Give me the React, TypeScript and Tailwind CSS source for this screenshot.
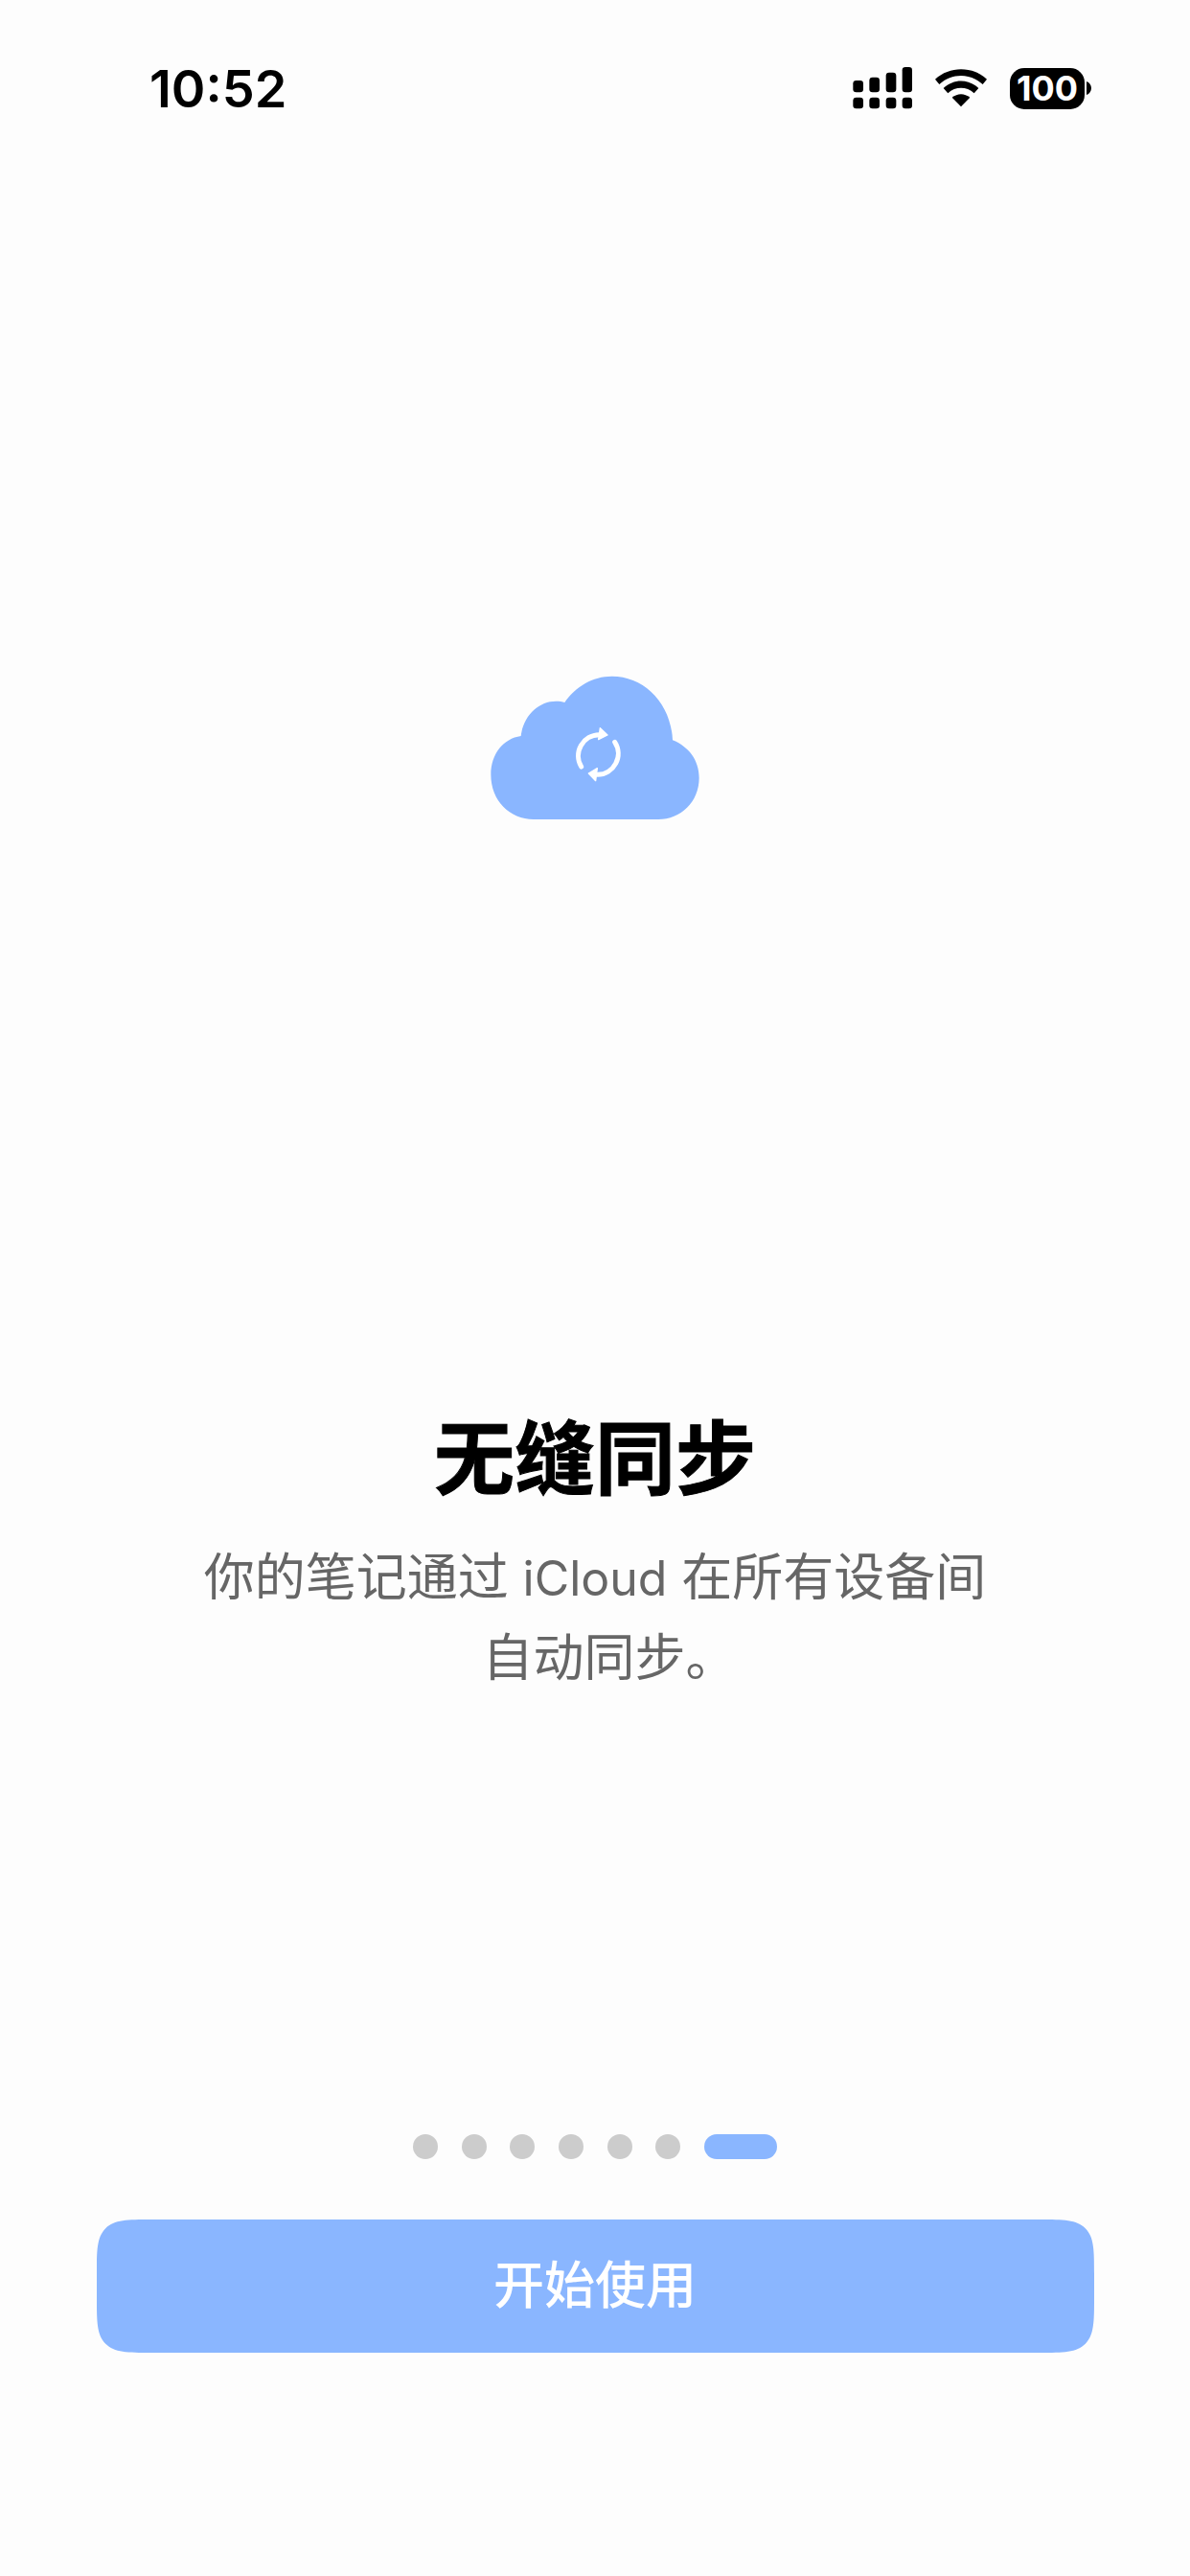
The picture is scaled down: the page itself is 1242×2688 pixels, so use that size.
import React from "react";

const FONT = "font-['Inter','Noto_Sans_CJK_SC',sans-serif]";

function SignalIcon() {
  return (
    <svg width="62" height="44" viewBox="0 0 186 132" className="block fill-black">
      <rect x="1" y="42" width="32" height="37" rx="10" />
      <rect x="52" y="32" width="32" height="47" rx="10" />
      <rect x="104" y="17" width="32" height="62" rx="10" />
      <rect x="155" y="0" width="31" height="79" rx="10" />
      <rect x="1" y="95" width="32" height="35" rx="10" />
      <rect x="52" y="95" width="32" height="35" rx="10" />
      <rect x="104" y="95" width="32" height="35" rx="10" />
      <rect x="155" y="95" width="31" height="35" rx="10" />
    </svg>
  );
}

function WifiIcon() {
  return (
    <svg width="54" height="40" viewBox="0 0 162 120" className="block fill-black">
      <path d="M0 32 C45 -10 117 -10 162 32 L149 48 C110 12 52 12 13 48 Z" />
      <path d="M26 60 C58 30 104 30 136 60 L122 76 C98 54 64 54 40 76 Z" />
      <path d="M53 89 C70 75 92 75 109 89 L81 118 Z" />
    </svg>
  );
}

function Battery() {
  return (
    <div className="flex items-center gap-[2px]">
      <div className="flex h-[43px] w-[78px] items-center justify-center rounded-[15px] bg-black text-[36px] leading-none font-bold text-white">
        100
      </div>
      <svg width="5" height="14" viewBox="0 0 5 14" className="block fill-black">
        <path d="M0 0 C3 1 5 4 5 7 C5 10 3 13 0 14 Z" />
      </svg>
    </div>
  );
}

function CloudIcon() {
  return (
    <svg width="219" height="152" viewBox="0 0 657 456" className="block">
      <path
        fill="#8AB6FF"
        d="M135 450 C60 450 1 392 1 310 C1 245 40 197 95 189 C103 125 150 80 205 80 C215 80 225 81 232 84 C265 35 320 2 380 2 C480 2 565 85 570 202 C620 222 653 265 653 320 C653 395 595 450 525 450 Z"
      />
      <g fill="none" stroke="#fff" strokeWidth="15" strokeLinecap="round">
        <path d="M284 285 A66 66 0 0 1 340 185" />
        <path d="M389 208 A66 66 0 0 1 335 310" />
      </g>
      <path
        fill="#fff"
        stroke="#fff"
        strokeWidth="4"
        strokeLinejoin="round"
        d="M343 164 L366 186 L338 200 Z"
      />
      <path
        fill="#fff"
        stroke="#fff"
        strokeWidth="4"
        strokeLinejoin="round"
        d="M307 306 L334 290 L329 329 Z"
      />
    </svg>
  );
}

function PageDots({ count }: { count: number }) {
  return (
    <div className="flex items-center gap-[24.6px]">
      {Array.from({ length: count }).map((_, i) => (
        <div key={i} className="size-[26px] rounded-full bg-[#cccccc]" />
      ))}
      <div className="h-[26px] w-[76px] rounded-[13px] bg-[#8AB6FF]" />
    </div>
  );
}

export default function App() {
  return (
    <div className={`flex h-[2688px] w-[1242px] flex-col items-center bg-[#fdfdfd] ${FONT}`}>
      <div className="flex h-[184px] w-full items-start justify-between pt-[60px] pr-[103px] pl-[156px]">
        <span className="text-[54px] leading-[65px] font-semibold text-black">10:52</span>
        <div className="flex items-center gap-[24px] pt-[10px]">
          <SignalIcon />
          <WifiIcon />
          <Battery />
        </div>
      </div>

      <div className="mt-[521px]">
        <CloudIcon />
      </div>

      <h1 className="mt-[616px] text-[84px] leading-[100px] font-bold text-black [-webkit-text-stroke:1px_#000]">
        无缝同步
      </h1>
      <p className="mt-[32px] text-center text-[53px] leading-[83px] font-normal whitespace-nowrap text-[#666666]">
        你的笔记通过 <span className="text-[50px]">iCloud</span> 在所有设备间
        <br />
        <span className="pl-[30px]">自动同步。</span>
      </p>

      <div className="mt-[455px]">
        <PageDots count={6} />
      </div>

      <button className="mt-[63px] flex h-[139px] w-[1041px] items-center justify-center rounded-[58px] bg-[#8AB6FF] text-[53px] font-medium text-white [corner-shape:squircle]">
        开始使用
      </button>
    </div>
  );
}
